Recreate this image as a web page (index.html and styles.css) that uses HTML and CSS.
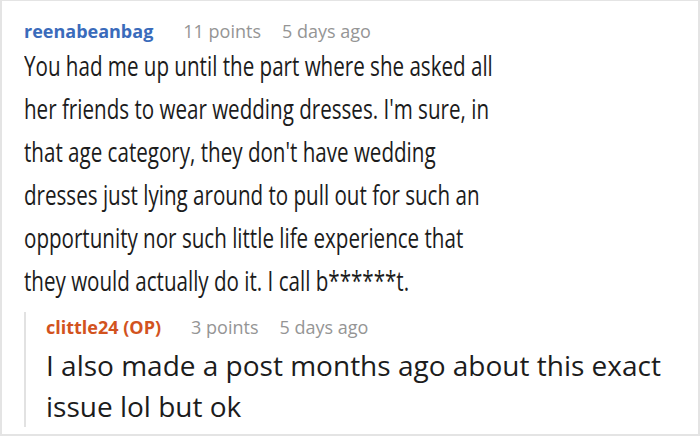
FILE: index.html
```html
<!DOCTYPE html>
<html>
<head>
<meta charset="utf-8">
<link rel="stylesheet" href="styles.css">
</head>
<body>
<div class="frame">
  <div class="comment">
    <div class="meta">
      <span class="author">reenabeanbag</span>
      <span class="info">11 points</span>
      <span class="info">5 days ago</span>
    </div>
    <p class="text">You had me up until the part where she asked all<br>her friends to wear wedding dresses. I'm sure, in<br>that age category, they don't have wedding<br>dresses just lying around to pull out for such an<br>opportunity nor such little life experience that<br>they would actually do it. I call b******t.</p>
    <div class="reply">
      <div class="meta reply-meta">
        <span class="author op">clittle24 (OP)</span>
        <span class="info">3 points</span>
        <span class="info">5 days ago</span>
      </div>
      <p class="reply-text">I also made a post months ago about this exact<br>issue lol but ok</p>
    </div>
  </div>
</div>
</body>
</html>
```

FILE: styles.css
```css
html, body {
  margin: 0;
  padding: 0;
  background: #ffffff;
}
.frame {
  width: 700px;
  height: 436px;
  box-sizing: border-box;
  border: 2px solid #e4e4e4;
  border-top-width: 1px;
  overflow: hidden;
}
.comment {
  padding: 15px 0 0 22px;
}
.meta {
  font-family: "Open Sans", "Noto Sans", sans-serif;
  font-size: 18px;
  line-height: 30px;
  display: flex;
  gap: 21px;
}
.author {
  font-weight: 700;
  color: #3a6bbb;
  margin-right: 9px;
}
.author.op {
  color: #d2531e;
}
.info {
  color: #959595;
}
.text {
  margin: -2px 0 0 0;
  font-family: "Open Sans", "Noto Sans", sans-serif;
  font-size: 28px;
  line-height: 43px;
  color: #1c1c1c;
  white-space: nowrap;
  transform-origin: left top;
  transform: scaleX(0.735);
}
.reply {
  margin-top: 23px;
  border-left: 2px solid #e2e2e2;
  padding-left: 20px;
}
.reply-meta {
  margin-top: -13px;
}
.reply-text {
  margin: 3px 0 -10px 0;
  font-family: "Open Sans", "Noto Sans", sans-serif;
  font-size: 28px;
  line-height: 41px;
  color: #1c1c1c;
  white-space: nowrap;
}
```
